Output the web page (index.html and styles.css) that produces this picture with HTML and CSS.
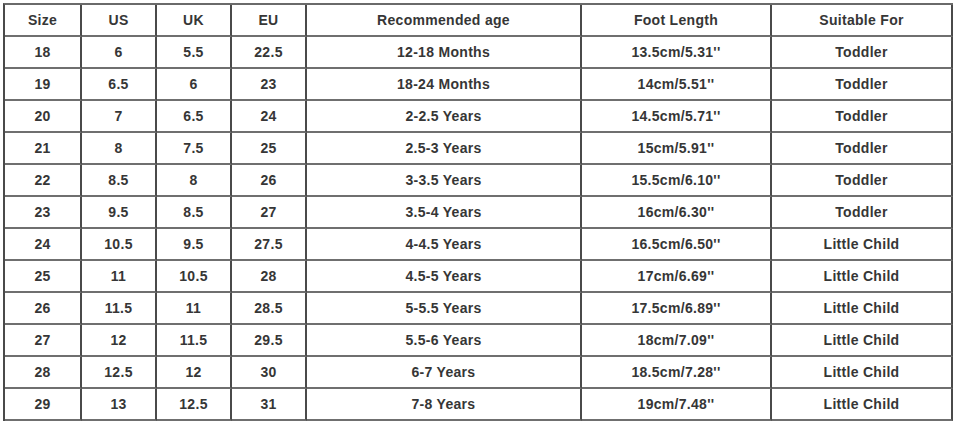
FILE: index.html
```html
<!DOCTYPE html>
<html>
<head>
<meta charset="utf-8">
<link rel="stylesheet" href="styles.css">
</head>
<body>
<div class="chart">
  <div class="cell">Size</div><div class="cell">US</div><div class="cell">UK</div><div class="cell">EU</div><div class="cell">Recommended age</div><div class="cell">Foot Length</div><div class="cell">Suitable For</div>
  <div class="cell">18</div><div class="cell">6</div><div class="cell">5.5</div><div class="cell">22.5</div><div class="cell">12-18 Months</div><div class="cell">13.5cm/5.31''</div><div class="cell">Toddler</div>
  <div class="cell">19</div><div class="cell">6.5</div><div class="cell">6</div><div class="cell">23</div><div class="cell">18-24 Months</div><div class="cell">14cm/5.51''</div><div class="cell">Toddler</div>
  <div class="cell">20</div><div class="cell">7</div><div class="cell">6.5</div><div class="cell">24</div><div class="cell">2-2.5 Years</div><div class="cell">14.5cm/5.71''</div><div class="cell">Toddler</div>
  <div class="cell">21</div><div class="cell">8</div><div class="cell">7.5</div><div class="cell">25</div><div class="cell">2.5-3 Years</div><div class="cell">15cm/5.91''</div><div class="cell">Toddler</div>
  <div class="cell">22</div><div class="cell">8.5</div><div class="cell">8</div><div class="cell">26</div><div class="cell">3-3.5 Years</div><div class="cell">15.5cm/6.10''</div><div class="cell">Toddler</div>
  <div class="cell">23</div><div class="cell">9.5</div><div class="cell">8.5</div><div class="cell">27</div><div class="cell">3.5-4 Years</div><div class="cell">16cm/6.30''</div><div class="cell">Toddler</div>
  <div class="cell">24</div><div class="cell">10.5</div><div class="cell">9.5</div><div class="cell">27.5</div><div class="cell">4-4.5 Years</div><div class="cell">16.5cm/6.50''</div><div class="cell">Little Child</div>
  <div class="cell">25</div><div class="cell">11</div><div class="cell">10.5</div><div class="cell">28</div><div class="cell">4.5-5 Years</div><div class="cell">17cm/6.69''</div><div class="cell">Little Child</div>
  <div class="cell">26</div><div class="cell">11.5</div><div class="cell">11</div><div class="cell">28.5</div><div class="cell">5-5.5 Years</div><div class="cell">17.5cm/6.89''</div><div class="cell">Little Child</div>
  <div class="cell">27</div><div class="cell">12</div><div class="cell">11.5</div><div class="cell">29.5</div><div class="cell">5.5-6 Years</div><div class="cell">18cm/7.09''</div><div class="cell">Little Child</div>
  <div class="cell">28</div><div class="cell">12.5</div><div class="cell">12</div><div class="cell">30</div><div class="cell">6-7 Years</div><div class="cell">18.5cm/7.28''</div><div class="cell">Little Child</div>
  <div class="cell">29</div><div class="cell">13</div><div class="cell">12.5</div><div class="cell">31</div><div class="cell">7-8 Years</div><div class="cell">19cm/7.48''</div><div class="cell">Little Child</div>
</div>
</body>
</html>
```
FILE: styles.css
```css
html, body {
  margin: 0;
  padding: 0;
  background: #fff;
}
.chart {
  margin: 3px 0 0 3px;
  display: grid;
  grid-template-columns: 77px 75px 75px 75px 275px 190px 181px;
  grid-auto-rows: 32px;
  width: 948px;
  border-left: 2px solid #4a4a4a;
  border-top: 2px solid #6a6a6a;
  font-family: "Liberation Sans", Arial, sans-serif;
  font-size: 14px;
  font-weight: bold;
  letter-spacing: 0.3px;
  color: #363636;
}
.cell {
  display: flex;
  align-items: center;
  justify-content: center;
  border-right: 2px solid #4a4a4a;
  border-bottom: 2px solid #6f6f6f;
  white-space: nowrap;
}
```
